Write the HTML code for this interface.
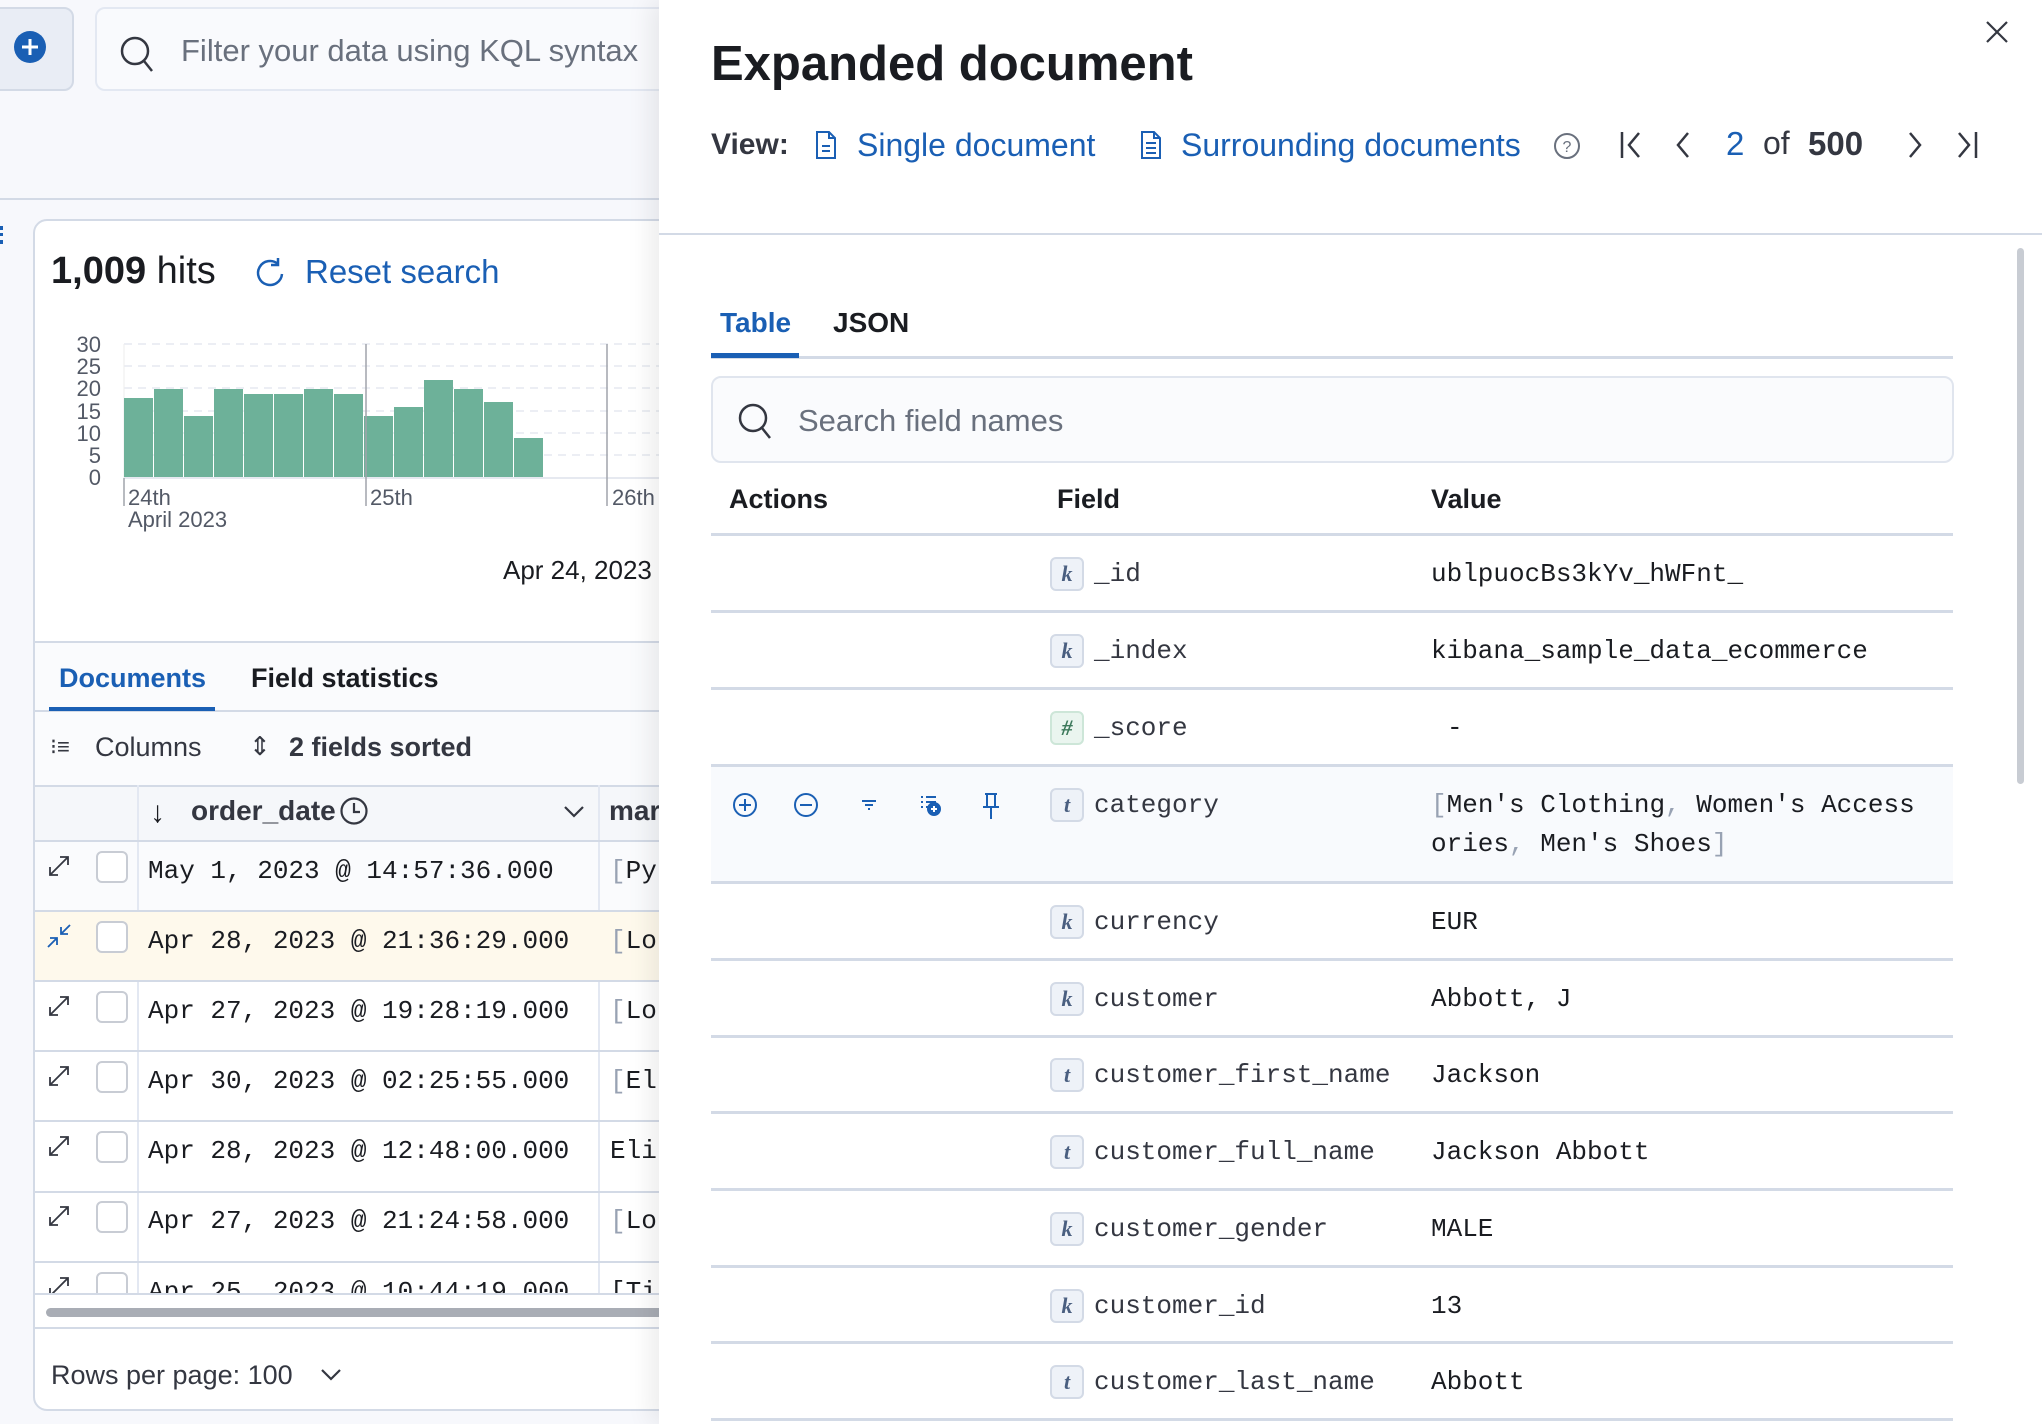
<!DOCTYPE html>
<html><head><meta charset="utf-8"><style>
*{box-sizing:border-box;margin:0;padding:0}
body{width:2042px;height:1424px;overflow:hidden;background:#f7f8fc;font-family:"Liberation Sans",sans-serif;color:#1a1c21;position:relative}
.a{position:absolute;white-space:nowrap}
.mono{font-family:"Liberation Mono",monospace}
.blue{color:#1a5fb4}
.tok{position:absolute;left:1050px;width:34px;height:34px;border:2px solid #d3dae6;background:#eef2f8;border-radius:6px;font-family:"Liberation Serif",serif;font-style:italic;font-weight:bold;font-size:22px;color:#4a5f80;text-align:center;line-height:30px}
.hl{position:absolute;left:711px;width:1242px;height:3px;background:#d3dae6}
.fn{position:absolute;left:1094px;font-family:"Liberation Mono",monospace;font-size:26px;color:#343741}
.fv{position:absolute;left:1431px;font-family:"Liberation Mono",monospace;font-size:26px;color:#1a1c21}
.lr{position:absolute;left:33px;width:640px;height:2px;background:#d3dae6}
.dt{position:absolute;left:148px;font-family:"Liberation Mono",monospace;font-size:26px;color:#1a1c21}
.cb{position:absolute;left:96px;width:32px;height:32px;border:2px solid #c8ccd4;border-radius:6px;background:#fff}
.ex{position:absolute;left:46px;width:26px;height:26px}
</style></head><body>
<div class="a" style="left:-10px;top:7px;width:84px;height:84px;background:#e9edf5;border:2px solid #d3dae6;border-radius:10px"></div>
<svg class="a" style="left:13px;top:30px" width="34" height="34" viewBox="0 0 34 34"><circle cx="17" cy="17" r="16" fill="#1a5fb4"/><path d="M17 9v16M9 17h16" stroke="#fff" stroke-width="3"/></svg>
<div class="a" style="left:95px;top:7px;width:600px;height:84px;background:#f9fafd;border:2px solid #e3e8f2;border-radius:10px"></div>
<svg class="a" style="left:118px;top:34px" width="40" height="40" viewBox="0 0 40 40"><circle cx="17" cy="17" r="13" fill="none" stroke="#343741" stroke-width="2.5"/><path d="M26 27l8 10" stroke="#343741" stroke-width="2.5"/></svg>
<div class="a" style="left:181px;top:33px;font-size:31px;color:#69707d">Filter your data using KQL syntax</div>
<div class="a" style="left:0;top:198px;width:680px;height:2px;background:#d3dae6"></div>
<div class="a" style="left:0;top:226px;width:4px;height:18px;border-left:3px dotted #1a5fb4"></div>
<div class="a" style="left:33px;top:219px;width:680px;height:1192px;background:#fff;border:2px solid #d3dae6;border-radius:14px"></div>
<div class="a" style="left:51px;top:250px;font-size:38px"><b>1,009</b> hits</div>
<svg class="a" style="left:254px;top:256px" width="32" height="32" viewBox="0 0 32 32"><path d="M24 8A12 12 0 1 0 28 18" fill="none" stroke="#1a5fb4" stroke-width="2.5"/><path d="M24 2v7h-7" fill="none" stroke="#1a5fb4" stroke-width="2.5"/></svg>
<div class="a blue" style="left:305px;top:253px;font-size:33px">Reset search</div>
<svg class="a" style="left:60px;top:330px" width="620" height="210" viewBox="60 330 620 210" font-family="Liberation Sans" font-size="22" fill="#535966">
<g stroke="#e6e9f0" stroke-width="1.5" stroke-dasharray="8 6"><line x1="124" y1="344" x2="680" y2="344"/><line x1="124" y1="366" x2="680" y2="366"/><line x1="124" y1="388" x2="680" y2="388"/><line x1="124" y1="411" x2="680" y2="411"/><line x1="124" y1="433" x2="680" y2="433"/><line x1="124" y1="455" x2="680" y2="455"/></g>
<line x1="124" y1="344" x2="124" y2="478" stroke="#eee"/>
<g fill="#6db199">
<rect x="124" y="398" width="29" height="80"/><rect x="154" y="389" width="29" height="89"/><rect x="184" y="416" width="29" height="62"/><rect x="214" y="389" width="29" height="89"/><rect x="244" y="394" width="29" height="84"/><rect x="274" y="394" width="29" height="84"/><rect x="304" y="389" width="29" height="89"/><rect x="334" y="394" width="29" height="84"/><rect x="364" y="416" width="29" height="62"/><rect x="394" y="407" width="29" height="71"/><rect x="424" y="380" width="29" height="98"/><rect x="454" y="389" width="29" height="89"/><rect x="484" y="402" width="29" height="76"/><rect x="514" y="438" width="29" height="40"/>
</g>
<line x1="124" y1="478" x2="680" y2="478" stroke="#e6e9f0" stroke-width="2"/>
<line x1="366" y1="344" x2="366" y2="506" stroke="#a0a4ab" stroke-width="1.5"/>
<line x1="607" y1="344" x2="607" y2="506" stroke="#a0a4ab" stroke-width="1.5"/>
<line x1="124" y1="478" x2="124" y2="506" stroke="#a0a4ab" stroke-width="1.5"/>
<g text-anchor="end"><text x="101" y="352">30</text><text x="101" y="374">25</text><text x="101" y="396">20</text><text x="101" y="419">15</text><text x="101" y="441">10</text><text x="101" y="463">5</text><text x="101" y="485">0</text></g>
<text x="128" y="505">24th</text><text x="128" y="527">April 2023</text><text x="370" y="505">25th</text><text x="612" y="505">26th</text>
</svg>
<div class="a" style="left:503px;top:555px;font-size:26px">Apr 24, 2023</div>
<div class="a" style="left:35px;top:641px;width:660px;height:2px;background:#d3dae6"></div>
<div class="a" style="left:35px;top:643px;width:660px;height:268px;background:#fafbfd"></div>
<div class="a blue" style="left:59px;top:663px;font-size:27px;font-weight:bold">Documents</div>
<div class="a" style="left:251px;top:663px;font-size:27px;font-weight:bold">Field statistics</div>
<div class="a" style="left:35px;top:710px;width:660px;height:2px;background:#d3dae6"></div>
<div class="a" style="left:49px;top:707px;width:166px;height:4px;background:#1a5fb4"></div>
<div class="a" style="left:50px;top:735px;font-size:22px;line-height:24px;color:#343741">⁝≡</div>
<div class="a" style="left:95px;top:732px;font-size:27px;color:#343741">Columns</div>
<div class="a" style="left:249px;top:731px;font-size:26px;color:#343741">⇕</div>
<div class="a" style="left:289px;top:732px;font-size:27px;font-weight:bold;color:#343741">2 fields sorted</div>
<div class="a" style="left:35px;top:785px;width:660px;height:55px;background:#f5f7fa;border-top:2px solid #d3dae6"></div>
<div class="a" style="left:137px;top:785px;width:2px;height:508px;background:#e3e8f2"></div>
<div class="a" style="left:598px;top:785px;width:2px;height:508px;background:#e3e8f2"></div>
<div class="a" style="left:150px;top:796px;font-size:30px">↓</div>
<div class="a" style="left:191px;top:795px;font-size:28px;font-weight:bold;color:#343741">order_date</div>
<svg class="a" style="left:339px;top:796px" width="30" height="30" viewBox="0 0 30 30"><circle cx="15" cy="15" r="12.5" fill="none" stroke="#343741" stroke-width="2.2"/><path d="M15 7v9h6" fill="none" stroke="#343741" stroke-width="2.2"/></svg>
<svg class="a" style="left:563px;top:805px" width="22" height="14" viewBox="0 0 22 14"><path d="M2 2l9 9 9-9" fill="none" stroke="#343741" stroke-width="2.2"/></svg>
<div class="a" style="left:609px;top:795px;font-size:28px;font-weight:bold;color:#343741">mar</div>
<div class="a" style="left:35px;top:910px;width:660px;height:71px;background:#fef9ec"></div>
<div class="lr" style="top:840px"></div><div class="lr" style="top:910px"></div><div class="lr" style="top:980px"></div><div class="lr" style="top:1050px"></div><div class="lr" style="top:1120px"></div><div class="lr" style="top:1191px"></div><div class="lr" style="top:1261px"></div>
<svg class="ex" style="top:853px" viewBox="0 0 26 26"><path d="M4 22L22 4M14 4h8v8M4 14v8h8" fill="none" stroke="#343741" stroke-width="1.8"/></svg>
<svg class="ex" style="top:923px" viewBox="0 0 26 26"><path d="M2 24l9-9M4 15h7v7M24 2l-9 9M15 4v7h7" fill="none" stroke="#1a5fb4" stroke-width="1.8"/></svg>
<svg class="ex" style="top:993px" viewBox="0 0 26 26"><path d="M4 22L22 4M14 4h8v8M4 14v8h8" fill="none" stroke="#343741" stroke-width="1.8"/></svg>
<svg class="ex" style="top:1063px" viewBox="0 0 26 26"><path d="M4 22L22 4M14 4h8v8M4 14v8h8" fill="none" stroke="#343741" stroke-width="1.8"/></svg>
<svg class="ex" style="top:1133px" viewBox="0 0 26 26"><path d="M4 22L22 4M14 4h8v8M4 14v8h8" fill="none" stroke="#343741" stroke-width="1.8"/></svg>
<svg class="ex" style="top:1203px" viewBox="0 0 26 26"><path d="M4 22L22 4M14 4h8v8M4 14v8h8" fill="none" stroke="#343741" stroke-width="1.8"/></svg>
<div class="cb" style="top:851px"></div><div class="cb" style="top:921px"></div><div class="cb" style="top:991px"></div><div class="cb" style="top:1061px"></div><div class="cb" style="top:1131px"></div><div class="cb" style="top:1201px"></div>
<div class="dt" style="top:856px">May 1, 2023 @ 14:57:36.000</div>
<div class="dt" style="top:926px">Apr 28, 2023 @ 21:36:29.000</div>
<div class="dt" style="top:996px">Apr 27, 2023 @ 19:28:19.000</div>
<div class="dt" style="top:1066px">Apr 30, 2023 @ 02:25:55.000</div>
<div class="dt" style="top:1136px">Apr 28, 2023 @ 12:48:00.000</div>
<div class="dt" style="top:1206px">Apr 27, 2023 @ 21:24:58.000</div>
<div class="dt" style="left:610px;top:856px"><span style="color:#98a2b3">[</span>Py</div>
<div class="dt" style="left:610px;top:926px"><span style="color:#98a2b3">[</span>Lo</div>
<div class="dt" style="left:610px;top:996px"><span style="color:#98a2b3">[</span>Lo</div>
<div class="dt" style="left:610px;top:1066px"><span style="color:#98a2b3">[</span>El</div>
<div class="dt" style="left:610px;top:1136px">Eli</div>
<div class="dt" style="left:610px;top:1206px"><span style="color:#98a2b3">[</span>Lo</div>
<div class="a" style="left:35px;top:1262px;width:660px;height:31px;overflow:hidden"><svg class="ex" style="left:11px;top:12px" viewBox="0 0 26 26"><path d="M4 22L22 4M14 4h8v8M4 14v8h8" fill="none" stroke="#343741" stroke-width="1.8"/></svg><div class="cb" style="left:61px;top:10px"></div><div class="dt" style="left:113px;top:15px">Apr 25, 2023 @ 10:44:19.000</div><div class="dt" style="left:575px;top:15px">[Ti</div></div>
<div class="a" style="left:35px;top:1293px;width:660px;height:2px;background:#d3dae6"></div>
<div class="a" style="left:46px;top:1308px;width:640px;height:9px;background:#a9adb5;border-radius:5px"></div>
<div class="a" style="left:35px;top:1327px;width:660px;height:2px;background:#d3dae6"></div>
<div class="a" style="left:51px;top:1360px;font-size:27px;color:#343741">Rows per page: 100</div>
<svg class="a" style="left:320px;top:1368px" width="22" height="14" viewBox="0 0 22 14"><path d="M2 2l9 9 9-9" fill="none" stroke="#343741" stroke-width="2.2"/></svg>

<div class="a" style="left:659px;top:0;width:1383px;height:1424px;background:#fff;box-shadow:-8px 0 24px rgba(0,0,0,.08)"></div>
<svg class="a" style="left:1985px;top:20px" width="24" height="24" viewBox="0 0 24 24"><path d="M2 2l20 20M22 2L2 22" stroke="#343741" stroke-width="2.2"/></svg>
<div class="a" style="left:711px;top:36px;font-size:49px;font-weight:bold">Expanded document</div>
<div class="a" style="left:711px;top:128px;font-size:30px;font-weight:bold;color:#343741">View:</div>
<svg class="a" style="left:814px;top:130px" width="24" height="30" viewBox="0 0 24 30"><path d="M3 2h12l6 6v20H3zM15 2v6h6M8 16h8M8 21h8" fill="none" stroke="#1a5fb4" stroke-width="2"/></svg>
<div class="a blue" style="left:857px;top:127px;font-size:32px">Single document</div>
<svg class="a" style="left:1139px;top:130px" width="24" height="30" viewBox="0 0 24 30"><path d="M3 2h12l6 6v20H3zM15 2v6h6M7 13h10M7 18h10M7 23h10" fill="none" stroke="#1a5fb4" stroke-width="2"/></svg>
<div class="a blue" style="left:1181px;top:127px;font-size:32px">Surrounding documents</div>
<svg class="a" style="left:1553px;top:132px" width="28" height="28" viewBox="0 0 28 28"><circle cx="14" cy="14" r="12" fill="none" stroke="#69707d" stroke-width="2"/><text x="14" y="20" font-size="16" text-anchor="middle" fill="#69707d" font-family="Liberation Sans">?</text></svg>
<svg class="a" style="left:1619px;top:130px" width="26" height="30" viewBox="0 0 26 30"><path d="M3 2v26M20 3L10 15l10 12" fill="none" stroke="#343741" stroke-width="2.5"/></svg>
<svg class="a" style="left:1672px;top:130px" width="22" height="30" viewBox="0 0 22 30"><path d="M16 3L6 15l10 12" fill="none" stroke="#343741" stroke-width="2.5"/></svg>
<div class="a blue" style="left:1726px;top:125px;font-size:33px">2</div>
<div class="a" style="left:1763px;top:125px;font-size:32px;color:#343741">of</div>
<div class="a" style="left:1808px;top:125px;font-size:33px;color:#343741;font-weight:600">500</div>
<svg class="a" style="left:1904px;top:130px" width="22" height="30" viewBox="0 0 22 30"><path d="M6 3l10 12L6 27" fill="none" stroke="#343741" stroke-width="2.5"/></svg>
<svg class="a" style="left:1953px;top:130px" width="26" height="30" viewBox="0 0 26 30"><path d="M6 3l10 12L6 27M23 2v26" fill="none" stroke="#343741" stroke-width="2.5"/></svg>
<div class="a" style="left:659px;top:233px;width:1383px;height:2px;background:#d3dae6"></div>
<div class="a" style="left:2017px;top:248px;width:7px;height:536px;background:#c8ccd3;border-radius:4px"></div>
<div class="a blue" style="left:720px;top:307px;font-size:28px;font-weight:bold">Table</div>
<div class="a" style="left:833px;top:307px;font-size:28px;font-weight:bold">JSON</div>
<div class="a" style="left:711px;top:356px;width:1242px;height:3px;background:#d3dae6"></div>
<div class="a" style="left:711px;top:353px;width:88px;height:5px;background:#1a5fb4"></div>
<div class="a" style="left:711px;top:376px;width:1243px;height:87px;background:#fafbfd;border:2px solid #e0e5ee;border-radius:10px"></div>
<svg class="a" style="left:736px;top:401px" width="40" height="40" viewBox="0 0 40 40"><circle cx="17" cy="17" r="13" fill="none" stroke="#343741" stroke-width="2.5"/><path d="M26 27l8 10" stroke="#343741" stroke-width="2.5"/></svg>
<div class="a" style="left:798px;top:403px;font-size:31px;color:#69707d">Search field names</div>
<div class="a" style="left:729px;top:484px;font-size:27px;font-weight:bold">Actions</div>
<div class="a" style="left:1057px;top:484px;font-size:27px;font-weight:bold">Field</div>
<div class="a" style="left:1431px;top:484px;font-size:27px;font-weight:bold">Value</div>
<div class="a" style="left:711px;top:767px;width:1242px;height:116px;background:#f8fafd"></div>
<div class="hl" style="top:533px"></div><div class="hl" style="top:610px"></div><div class="hl" style="top:687px"></div><div class="hl" style="top:764px"></div><div class="hl" style="top:881px"></div><div class="hl" style="top:958px"></div><div class="hl" style="top:1035px"></div><div class="hl" style="top:1111px"></div><div class="hl" style="top:1188px"></div><div class="hl" style="top:1265px"></div><div class="hl" style="top:1341px"></div><div class="hl" style="top:1418px"></div>
<div class="tok" style="top:557px">k</div><div class="fn" style="top:559px">_id</div><div class="fv" style="top:559px">ublpuocBs3kYv_hWFnt_</div>
<div class="tok" style="top:634px">k</div><div class="fn" style="top:636px">_index</div><div class="fv" style="top:636px">kibana_sample_data_ecommerce</div>
<div class="tok" style="top:711px;background:#eaf5ef;border-color:#cde6d8;color:#3d7a5c">#</div><div class="fn" style="top:713px">_score</div><div class="fv" style="top:713px;left:1447px">-</div>
<svg class="a" style="left:733px;top:790px" width="290" height="30" viewBox="0 0 290 30" fill="none" stroke="#1a5fb4" stroke-width="2">
<circle cx="12" cy="15" r="11"/><path d="M12 9v12M6 15h12"/>
<circle cx="73" cy="15" r="11"/><path d="M67 15h12"/>
<path d="M129 11h14M132 15h8M135 19h2"/>
<path d="M188 7h2M193 7h10M188 12h2M193 12h10M188 17h2M193 17h4"/><circle cx="201" cy="19" r="6" fill="#1a5fb4"/><path d="M201 16v6M198 19h6" stroke="#fff"/>
<path d="M252 4h12M254 4v13h8V4M250 17h16M258 17v12"/>
</svg>
<div class="tok" style="top:788px">t</div><div class="fn" style="top:790px">category</div>
<div class="fv" style="top:790px"><span style="color:#98a2b3">[</span>Men's Clothing<span style="color:#98a2b3">,</span> Women's Access</div>
<div class="fv" style="top:829px">ories<span style="color:#98a2b3">,</span> Men's Shoes<span style="color:#98a2b3">]</span></div>
<div class="tok" style="top:905px">k</div><div class="fn" style="top:907px">currency</div><div class="fv" style="top:907px">EUR</div>
<div class="tok" style="top:982px">k</div><div class="fn" style="top:984px">customer</div><div class="fv" style="top:984px">Abbott, J</div>
<div class="tok" style="top:1058px">t</div><div class="fn" style="top:1060px">customer_first_name</div><div class="fv" style="top:1060px">Jackson</div>
<div class="tok" style="top:1135px">t</div><div class="fn" style="top:1137px">customer_full_name</div><div class="fv" style="top:1137px">Jackson Abbott</div>
<div class="tok" style="top:1212px">k</div><div class="fn" style="top:1214px">customer_gender</div><div class="fv" style="top:1214px">MALE</div>
<div class="tok" style="top:1289px">k</div><div class="fn" style="top:1291px">customer_id</div><div class="fv" style="top:1291px">13</div>
<div class="tok" style="top:1365px">t</div><div class="fn" style="top:1367px">customer_last_name</div><div class="fv" style="top:1367px">Abbott</div>
</body></html>
